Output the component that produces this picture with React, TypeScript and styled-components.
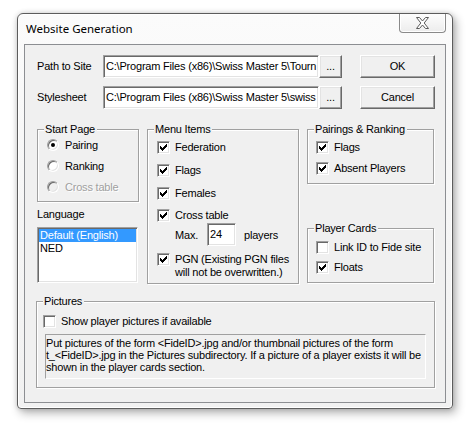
import React from 'react';
import styled, { createGlobalStyle } from 'styled-components';

const Global = createGlobalStyle`
  html, body { margin: 0; padding: 0; background: #fff; }
  body { font-family: "Liberation Sans", Arial, sans-serif; font-size: 11px; letter-spacing: -0.2px; color: #000; }
`;

const Desktop = styled.div`
  width: 474px;
  height: 429px;
  box-sizing: border-box;
  padding: 13px 0 0 17px;
`;

const Window = styled.div`
  width: 436px;
  height: 396px;
  box-sizing: border-box;
  border: 1px solid #5c5c5c;
  border-radius: 6px 6px 4px 4px;
  background: linear-gradient(#fbfbfb, #f1f1f1);
  box-shadow: inset 0 0 0 1px #ffffff, 3px 4px 10px rgba(0, 0, 0, 0.3), 0 0 5px rgba(0, 0, 0, 0.15);
  display: flex;
  flex-direction: column;
  padding: 0 6px 5px 6px;
`;

const TitleBar = styled.div`
  height: 30px;
  display: flex;
  align-items: flex-start;
  justify-content: space-between;
`;

const Title = styled.div`
  font-family: "Noto Sans", "Open Sans", sans-serif;
  font-size: 11.5px;
  letter-spacing: 0;
  line-height: 16px;
  padding: 7px 0 0 2px;
`;

const CloseButton = styled.div`
  width: 47px;
  height: 19px;
  box-sizing: border-box;
  border: 1px solid #8a8a8a;
  border-top: none;
  border-radius: 0 0 4px 4px;
  background: linear-gradient(#fdfdfd, #ececec);
  box-shadow: inset 0 -1px 0 #fff, inset 1px 0 0 #fff, inset -1px 0 0 #fff;
  display: flex;
  align-items: center;
  justify-content: center;
`;

const Client = styled.div`
  flex: 1;
  border: 1px solid #8c8e92;
  background: #f0f0f0;
  padding: 10px 0 0 11px;
`;

const PathGrid = styled.div`
  display: grid;
  grid-template-columns: 67px 216px 23px 18px 75px;
  grid-auto-rows: 23px;
  row-gap: 8px;
  align-items: center;
`;

const FieldLabel = styled.div`
  line-height: 13px;
  padding-left: 1px;
`;

const TextBox = styled.div<{ $w?: number }>`
  box-sizing: border-box;
  min-width: 0;
  height: 23px;
  ${p => (p.$w ? `width: ${p.$w}px;` : '')}
  border: 1px solid;
  border-color: #a0a0a0 #fff #fff #a0a0a0;
  box-shadow: inset 1px 1px 0 #696969, inset -1px -1px 0 #e3e3e3;
  background: #fff;
  padding: 0 0 0 2px;
  line-height: 21px;
  white-space: nowrap;
  overflow: hidden;
`;

const Button = styled.div`
  box-sizing: border-box;
  height: 23px;
  border: 1px solid;
  border-color: #fff #696969 #696969 #fff;
  box-shadow: inset -1px -1px 0 #a0a0a0, inset 1px 1px 0 #e3e3e3;
  background: #f0f0f0;
  display: flex;
  align-items: center;
  justify-content: center;
  line-height: 13px;
`;

const Spacer = styled.div``;

const Middle = styled.div`
  display: grid;
  grid-template-columns: 102px 152px 127px;
  column-gap: 8px;
  align-items: start;
  margin: 20px 0 0 1px;
`;

const Column = styled.div`
  display: flex;
  flex-direction: column;
`;

const GroupBox = styled.div<{ $h: number; $pt: number; $pl: number; $mt?: number; $w?: number }>`
  position: relative;
  box-sizing: border-box;
  height: ${p => p.$h}px;
  ${p => (p.$w ? `width: ${p.$w}px;` : '')}
  margin-top: ${p => p.$mt ?? 0}px;
  border: 1px solid #a0a0a0;
  box-shadow: inset 1px 1px 0 #fff, 1px 1px 0 #fff;
  padding: ${p => p.$pt}px 0 0 ${p => p.$pl}px;
  display: flex;
  flex-direction: column;
  align-items: flex-start;
`;

const Legend = styled.div`
  position: absolute;
  top: -7px;
  left: 6px;
  padding: 0 2px 0 1px;
  background: #f0f0f0;
  line-height: 13px;
`;

const OptionRow = styled.div<{ $mt?: number; $top?: boolean }>`
  display: flex;
  align-items: ${p => (p.$top ? 'flex-start' : 'center')};
  gap: 5px;
  min-height: 16px;
  margin-top: ${p => p.$mt ?? 0}px;
  line-height: 13px;
`;

const Box = styled.span`
  box-sizing: border-box;
  width: 13px;
  height: 13px;
  flex: none;
  border: 1px solid;
  border-color: #a0a0a0 #fff #fff #a0a0a0;
  box-shadow: inset 1px 1px 0 #696969, inset -1px -1px 0 #e3e3e3;
  background: #fff;
  display: flex;
  align-items: center;
  justify-content: center;
`;

const Radio = styled.span<{ $disabled?: boolean }>`
  box-sizing: border-box;
  width: 12px;
  height: 12px;
  flex: none;
  border-radius: 50%;
  border: 1px solid;
  border-color: #a0a0a0 #fff #fff #a0a0a0;
  box-shadow: inset 1px 1px 0 #696969, inset -1px -1px 0 #e3e3e3;
  background: ${p => (p.$disabled ? '#f0f0f0' : '#fff')};
  display: flex;
  align-items: center;
  justify-content: center;
  margin-right: 1px;
`;

const Dot = styled.span`
  width: 4px;
  height: 4px;
  border-radius: 50%;
  background: #000;
`;

const OptionText = styled.span<{ $disabled?: boolean }>`
  color: ${p => (p.$disabled ? '#a0a0a0' : '#000')};
  ${p => (p.$disabled ? 'text-shadow: 1px 1px 0 #fff;' : '')}
`;

const MaxRow = styled.div`
  display: flex;
  align-items: center;
  height: 23px;
  padding-left: 18px;
`;

const MaxLabel = styled.span`
  width: 32px;
`;

const PlayersLabel = styled.span`
  margin-left: 8px;
`;

const ListLabel = styled.div`
  margin-top: 6px;
  line-height: 13px;
`;

const ListBox = styled.div`
  box-sizing: border-box;
  width: 101px;
  height: 56px;
  margin-top: 6px;
  border: 1px solid;
  border-color: #a0a0a0 #fff #fff #a0a0a0;
  box-shadow: inset 1px 1px 0 #696969, inset -1px -1px 0 #e3e3e3;
  background: #fff;
  padding: 1px 1px 0 1px;
`;

const ListItem = styled.div<{ $selected?: boolean }>`
  height: 13px;
  line-height: 13px;
  padding-left: 1px;
  background: ${p => (p.$selected ? '#3399ff' : 'transparent')};
  color: ${p => (p.$selected ? '#fff' : '#000')};
`;

const Pictures = styled(GroupBox)`
  margin-top: 17px;
`;

const InfoBox = styled.div`
  box-sizing: border-box;
  width: 381px;
  height: 45px;
  margin: 5px 0 0 2px;
  border: 1px solid;
  border-color: #a0a0a0 #fff #fff #a0a0a0;
  padding: 2px 0 0 0;
  line-height: 12px;
  white-space: nowrap;
`;

const checkPixels: [number, number, number][] = [
  [6, 0, 1], [5, 1, 2], [0, 2, 1], [4, 2, 3], [0, 3, 2], [3, 3, 3], [0, 4, 5], [1, 5, 3], [2, 6, 1],
];
const checkPath = checkPixels.map(([x, y, w]) => `M${x} ${y}h${w}v1h-${w}z`).join('');

const CheckBox = ({ checked }: { checked?: boolean }) => (
  <Box>
    {checked && (
      <svg width="7" height="7" viewBox="0 0 7 7" shapeRendering="crispEdges">
        <path d={checkPath} fill="#000" />
      </svg>
    )}
  </Box>
);

const Check = ({ label, checked, mt }: { label: string; checked?: boolean; mt?: number }) => (
  <OptionRow $mt={mt}>
    <CheckBox checked={checked} />
    <OptionText>{label}</OptionText>
  </OptionRow>
);

const RadioOption = ({ label, selected, disabled, mt }: { label: string; selected?: boolean; disabled?: boolean; mt?: number }) => (
  <OptionRow $mt={mt}>
    <Radio $disabled={disabled}>{selected && <Dot />}</Radio>
    <OptionText $disabled={disabled}>{label}</OptionText>
  </OptionRow>
);

const CloseGlyph = () => (
  <svg width="15" height="12" viewBox="0 0 15 12">
    <path
      d="M1.5 0.5 L4.5 0.5 L7.5 4 L10.5 0.5 L13.5 0.5 L9.2 6 L13.5 11.5 L10.5 11.5 L7.5 8 L4.5 11.5 L1.5 11.5 L5.8 6 Z"
      fill="#fff"
      stroke="#5a5a5a"
      strokeWidth="1"
      strokeLinejoin="round"
    />
  </svg>
);

export default function App() {
  return (
    <>
      <Global />
      <Desktop>
        <Window>
          <TitleBar>
            <Title>Website Generation</Title>
            <CloseButton>
              <CloseGlyph />
            </CloseButton>
          </TitleBar>
          <Client>
            <PathGrid>
              <FieldLabel>Path to Site</FieldLabel>
              <TextBox>C:\Program Files (x86)\Swiss Master 5\Tourn</TextBox>
              <Button>...</Button>
              <Spacer />
              <Button>OK</Button>
              <FieldLabel>Stylesheet</FieldLabel>
              <TextBox>C:\Program Files (x86)\Swiss Master 5\swiss</TextBox>
              <Button>...</Button>
              <Spacer />
              <Button>Cancel</Button>
            </PathGrid>

            <Middle>
              <Column>
                <GroupBox $h={73} $pt={7} $pl={9}>
                  <Legend>Start Page</Legend>
                  <RadioOption label="Pairing" selected />
                  <RadioOption label="Ranking" mt={5} />
                  <RadioOption label="Cross table" disabled mt={5} />
                </GroupBox>
                <ListLabel>Language</ListLabel>
                <ListBox>
                  <ListItem $selected>Default (English)</ListItem>
                  <ListItem>NED</ListItem>
                </ListBox>
              </Column>

              <GroupBox $h={155} $pt={9} $pl={9}>
                <Legend>Menu Items</Legend>
                <Check label="Federation" checked />
                <Check label="Flags" checked mt={7} />
                <Check label="Females" checked mt={7} />
                <Check label="Cross table" checked mt={6} />
                <MaxRow>
                  <MaxLabel>Max.</MaxLabel>
                  <TextBox $w={29}>24</TextBox>
                  <PlayersLabel>players</PlayersLabel>
                </MaxRow>
                <OptionRow $top $mt={7}>
                  <CheckBox checked />
                  <OptionText>
                    PGN (Existing PGN files
                    <br />
                    will not be overwritten.)
                  </OptionText>
                </OptionRow>
              </GroupBox>

              <Column>
                <GroupBox $h={55} $pt={9} $pl={8}>
                  <Legend>Pairings &amp; Ranking</Legend>
                  <Check label="Flags" checked />
                  <Check label="Absent Players" checked mt={5} />
                </GroupBox>
                <GroupBox $h={55} $pt={10} $pl={8} $mt={44}>
                  <Legend>Player Cards</Legend>
                  <Check label="Link ID to Fide site" />
                  <Check label="Floats" checked mt={4} />
                </GroupBox>
              </Column>
            </Middle>

            <Pictures $h={87} $w={399} $pt={11} $pl={6}>
              <Legend>Pictures</Legend>
              <Check label="Show player pictures if available" />
              <InfoBox>
                Put pictures of the form &lt;FideID&gt;.jpg and/or thumbnail pictures of the form
                <br />
                t_&lt;FideID&gt;.jpg in the Pictures subdirectory. If a picture of a player exists it will be
                <br />
                shown in the player cards section.
              </InfoBox>
            </Pictures>
          </Client>
        </Window>
      </Desktop>
    </>
  );
}
